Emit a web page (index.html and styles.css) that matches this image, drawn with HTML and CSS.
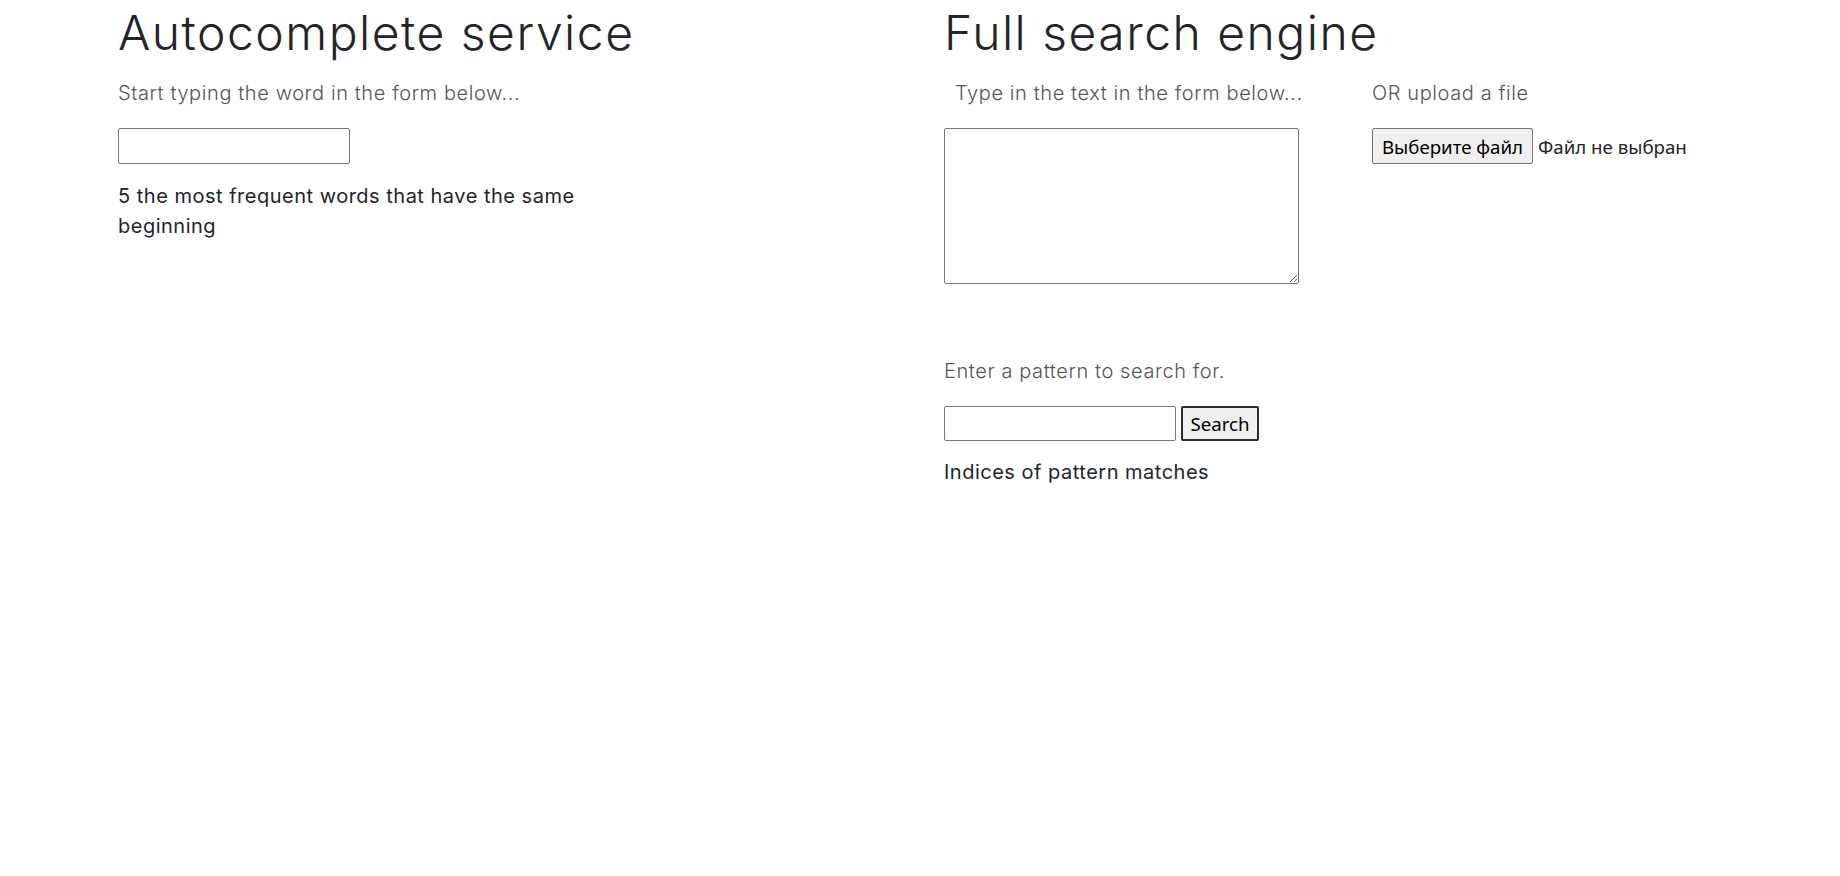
FILE: index.html
```html
<!DOCTYPE html>
<html lang="en">
<head>
<meta charset="utf-8">
<title>Search services</title>
<link rel="stylesheet" href="styles.css">
</head>
<body>
<main class="page">
  <section class="col col-left">
    <h1 class="title">Autocomplete service</h1>
    <p class="lead">Start typing the word in the form below...</p>
    <input class="field field-word" type="text">
    <p class="result result-narrow">5 the most frequent words that have the same beginning</p>
  </section>
  <section class="col col-right">
    <h1 class="title">Full search engine</h1>
    <div class="sub-row">
      <div class="sub sub-text">
        <p class="lead lead-indent">Type in the text in the form below...</p>
        <textarea class="area"></textarea>
      </div>
      <div class="sub sub-file">
        <p class="lead">OR upload a file</p>
        <div class="file">
          <button class="btn btn-file" type="button">Выберите файл</button>
          <span class="file-name">Файл не выбран</span>
        </div>
      </div>
    </div>
    <p class="lead lead-pattern">Enter a pattern to search for.</p>
    <div class="search">
      <input class="field field-pattern" type="text">
      <button class="btn btn-search" type="button">Search</button>
    </div>
    <p class="result">Indices of pattern matches</p>
  </section>
</main>
</body>
</html>
```
FILE: styles.css
```css
html, body {
  margin: 0;
  padding: 0;
  background: #fff;
}
body {
  font-family: Inter, "Liberation Sans", sans-serif;
  color: #212529;
}
.page {
  display: flex;
  padding: 4px 0 0 118px;
}
.col {
  display: flex;
  flex-direction: column;
  align-items: flex-start;
}
.col-left {
  flex: 0 0 826px;
}
.col-right {
  flex: 1 1 auto;
}
.title {
  margin: 0;
  font-size: 48px;
  line-height: 58px;
  font-weight: 300;
  letter-spacing: 1.5px;
  color: #212529;
}
.lead {
  margin: 16px 0 0;
  font-size: 20px;
  line-height: 30px;
  font-weight: 300;
  letter-spacing: 0.6px;
  color: #555;
  white-space: nowrap;
}
.lead-indent {
  padding-left: 11px;
}
.field {
  box-sizing: border-box;
  width: 232px;
  height: 36px;
  margin: 20px 0 0;
  border: 1px solid #767676;
  border-radius: 2px;
  background: #fff;
  font: 16px "Noto Sans", sans-serif;
}
.result {
  margin: 17px 0 0;
  font-size: 20px;
  line-height: 30px;
  font-weight: 400;
  letter-spacing: 0.5px;
  color: #212529;
}
.result-narrow {
  width: 520px;
}
.sub-row {
  display: flex;
}
.sub {
  display: flex;
  flex-direction: column;
  align-items: flex-start;
}
.sub-text {
  width: 355px;
}
.sub-file {
  margin-left: 73px;
}
.area {
  box-sizing: border-box;
  width: 355px;
  height: 156px;
  margin: 20px 0 0;
  border: 1px solid #767676;
  border-radius: 2px;
  resize: both;
}
.file {
  display: flex;
  align-items: center;
  gap: 5px;
  margin: 20px 0 0;
  font: 18.7px "Noto Sans", sans-serif;
  color: #212529;
}
.btn {
  box-sizing: border-box;
  height: 36px;
  padding: 0 6px;
  border: 1px solid #767676;
  border-radius: 2px;
  background: #efefef;
  font: 18.7px "Noto Sans", sans-serif;
  color: #000;
  white-space: nowrap;
}
.btn-file {
  width: 161px;
}
.lead-pattern {
  margin-top: 72px;
}
.search {
  display: flex;
  gap: 5px;
  margin-top: 20px;
}
.search .field {
  margin: 0;
  height: 35px;
}
.btn-search {
  width: 78px;
  height: 35px;
  border: 2px solid #2b2b2b;
}
.col-right .result {
  margin-top: 16px;
}
```
